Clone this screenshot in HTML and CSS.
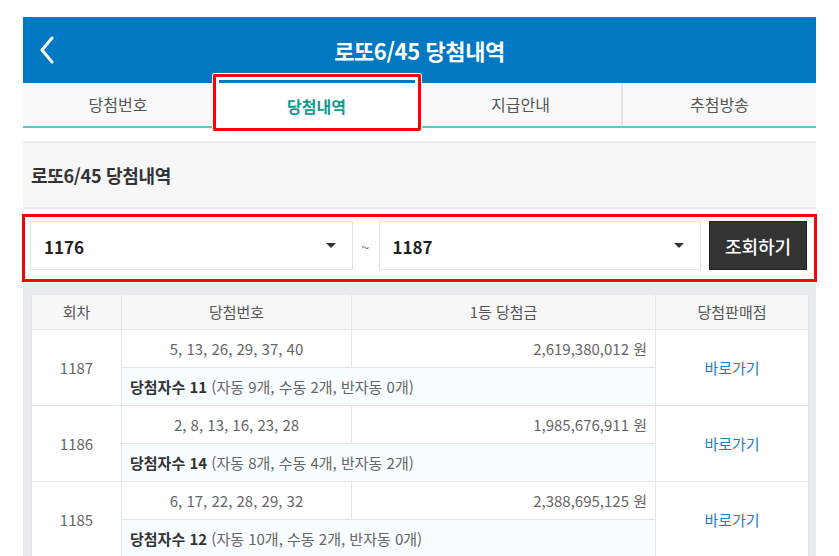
FILE: index.html
```html
<!DOCTYPE html>
<html lang="ko">
<head>
<meta charset="utf-8">
<title>로또6/45 당첨내역</title>
<link rel="stylesheet" href="styles.css">
</head>
<body>
<div class="page">
  <header class="topbar">
    <svg class="back" width="16" height="28" viewBox="0 0 16 28"><path d="M13 2 L3 14 L13 26" fill="none" stroke="#fff" stroke-width="3" stroke-linecap="round" stroke-linejoin="round"/></svg>
    <h1 class="title">로또6/45 당첨내역</h1>
  </header>
  <nav class="tabs">
    <div class="tab">당첨번호</div>
    <div class="tab active">당첨내역</div>
    <div class="tab">지급안내</div>
    <div class="tab">추첨방송</div>
  </nav>
  <div class="spacer"></div>
  <section class="section-head">
    <h2 class="section-title">로또6/45 당첨내역</h2>
  </section>
  <div class="search">
    <div class="select"><span>1176</span><i class="caret"></i></div>
    <span class="tilde">~</span>
    <div class="select"><span>1187</span><i class="caret"></i></div>
    <button class="btn">조회하기</button>
  </div>
  <div class="table-wrap">
    <table class="result">
      <colgroup>
        <col class="c1"><col class="c2"><col class="c3"><col class="c4">
      </colgroup>
      <thead>
        <tr><th>회차</th><th>당첨번호</th><th>1등 당첨금</th><th>당첨판매점</th></tr>
      </thead>
      <tbody>
        <tr class="r1"><td rowspan="2" class="round">1187</td><td class="nums">5, 13, 26, 29, 37, 40</td><td class="prize">2,619,380,012 원</td><td rowspan="2" class="shop"><a>바로가기</a></td></tr>
        <tr class="r2"><td colspan="2" class="winners"><b>당첨자수 11</b> (자동 9개, 수동 2개, 반자동 0개)</td></tr>
        <tr class="r1"><td rowspan="2" class="round">1186</td><td class="nums">2, 8, 13, 16, 23, 28</td><td class="prize">1,985,676,911 원</td><td rowspan="2" class="shop"><a>바로가기</a></td></tr>
        <tr class="r2"><td colspan="2" class="winners"><b>당첨자수 14</b> (자동 8개, 수동 4개, 반자동 2개)</td></tr>
        <tr class="r1"><td rowspan="2" class="round">1185</td><td class="nums">6, 17, 22, 28, 29, 32</td><td class="prize">2,388,695,125 원</td><td rowspan="2" class="shop"><a>바로가기</a></td></tr>
        <tr class="r2"><td colspan="2" class="winners"><b>당첨자수 12</b> (자동 10개, 수동 2개, 반자동 0개)</td></tr>
      </tbody>
    </table>
  </div>
  <div class="mark mark-tab"></div>
  <div class="mark mark-search"></div>
</div>
</body>
</html>
```
FILE: styles.css
```css
* { box-sizing: border-box; }
html, body { margin: 0; padding: 0; background: #fff; }
body { font-family: "Noto Sans CJK KR", "Noto Sans", sans-serif; color: #333; }
.page { position: relative; width: 793px; margin: 17px 0 0 23px; }

.topbar { height: 66px; background: #0078c2; display: flex; align-items: center; justify-content: center; position: relative; }
.back { position: absolute; left: 16px; top: 19px; }
.title { margin: 0; font-size: 22px; font-weight: 700; color: #fff; letter-spacing: -0.4px; }

.tabs { display: grid; grid-template-columns: 190px 207px 201px 195px; height: 45px; background: #f9f9f9; border-bottom: 2px solid #5ec6c4; }
.tab { display: flex; align-items: center; justify-content: center; font-size: 16px; color: #555; padding-bottom: 1px; }
.tab:nth-child(4) { border-left: 2px solid #e4e4e4; }
.tab.active { background: #fff; color: #13998f; font-weight: 700; border-top: 3px solid #1d76b8; margin-top: -3px; margin-bottom: -2px; padding-top: 2px; }

.spacer { height: 13px; background: #fff; }
.section-head { background: #f7f7f7; border-top: 2px solid #ececec; border-bottom: 2px solid #ececec; height: 68px; display: flex; align-items: center; padding-left: 8px; }
.section-title { margin: 0; font-size: 18px; font-weight: 700; color: #333; letter-spacing: -0.3px; }

.search { background: #fff; display: flex; align-items: center; padding: 12px 9px 10px 7px; }
.select { flex: 1; height: 49px; border: 1px solid #e3e3e3; background: #fff; display: flex; align-items: center; justify-content: space-between; padding: 2px 16px 0 13px; font-size: 17px; font-weight: 700; color: #222; }
.caret { width: 0; height: 0; border-left: 5px solid transparent; border-right: 5px solid transparent; border-top: 5px solid #333; margin-top: -2px; }
.tilde { width: 26px; text-align: center; color: #777; font-size: 15px; padding-top: 2px; }
.btn { width: 98px; height: 49px; margin-left: 8px; background: #333; color: #fff; border: 1px solid #222; font-family: inherit; font-size: 18px; font-weight: 500; padding: 0; }

.table-wrap { background: #e9ecee; padding: 15px 8px 0 8px; }
.result { width: 777px; border-collapse: collapse; background: #fff; table-layout: fixed; }
.c1 { width: 90px; } .c2 { width: 230px; } .c3 { width: 304px; } .c4 { width: 153px; }
.result th, .result td { border: 1px solid #e5e5e5; font-size: 15px; font-weight: 400; }
.result th { background: #f7f7f7; color: #555; height: 34px; text-align: center; padding-top: 1px; }
.result tr:first-child th { border-top: none; }
.result td { color: #666; }
.round { text-align: center; }
.nums { text-align: center; height: 38px; }
.prize { text-align: right; padding-right: 8px; }
.winners { background: #f8fdff; height: 38px; padding-left: 8px; color: #555; }
.winners b { color: #333; font-weight: 700; }
.shop { text-align: center; }
.shop a { color: #1a7fc1; }

.mark { position: absolute; border: 3px solid #ff0000; box-shadow: 0 0 0 1px #fff; pointer-events: none; }
.mark-tab { left: 190px; top: 57px; width: 208px; height: 57px; border-radius: 2px; box-shadow: 0 0 0 1px #fff, inset 0 0 0 3px #fff; }
.mark-search { left: -1px; top: 197px; width: 795px; height: 68px; }
```
